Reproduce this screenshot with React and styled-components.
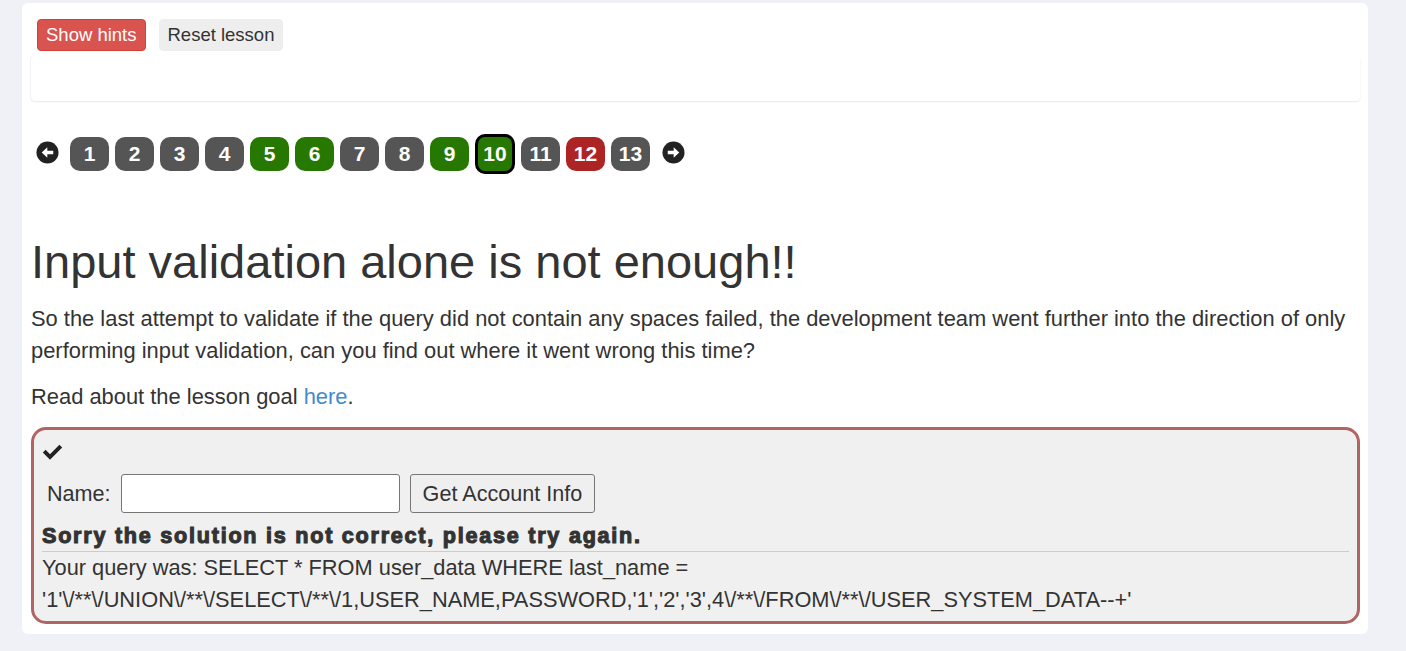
import React from "react";
import styled, { createGlobalStyle } from "styled-components";

const Global = createGlobalStyle`
  html, body { margin: 0; padding: 0; background: #f0f1f6; }
  body { font-family: "Liberation Sans", Arial, sans-serif; color: #333; }
  * { box-sizing: border-box; }
`;

const Card = styled.div`
  margin: 3px 0 0 22px;
  width: 1346px;
  height: 631px;
  background: #fff;
  border-radius: 6px;
  padding: 16px 8px 0 9px;
`;

const ButtonBar = styled.div`
  display: flex;
  gap: 13px;
  padding-left: 6px;
`;

const Btn = styled.button`
  height: 32px;
  padding: 0 8px;
  font-family: "Liberation Sans", Arial, sans-serif;
  font-size: 18.5px;
  border-radius: 4px;
  cursor: pointer;
  border: 1px solid ${(p) => (p.$danger ? "#d43f3a" : "#eeeeee")};
  background: ${(p) => (p.$danger ? "#d9534f" : "#eeeeee")};
  color: ${(p) => (p.$danger ? "#fff" : "#333")};
`;

const Panel = styled.div`
  margin-top: 4px;
  height: 46px;
  border-radius: 4px;
  background: #fff;
  box-shadow: 0 1px 2px rgba(0, 0, 0, 0.09), -1px 0 1px rgba(0, 0, 0, 0.03);
`;

const Pager = styled.div`
  display: flex;
  align-items: center;
  height: 40px;
  margin-top: 33px;
  padding-left: 5px;
`;

const ArrowWrap = styled.span`
  display: flex;
  width: 23px;
  height: 23px;
  margin: ${(p) => (p.$right ? "-3px 0 0 6px" : "-3px 11px 0 0")};
`;

const Pill = styled.span`
  display: flex;
  align-items: center;
  justify-content: center;
  width: ${(p) => (p.$active ? "40px" : "39px")};
  height: ${(p) => (p.$active ? "40px" : "34px")};
  margin-right: 6px;
  border-radius: 10px;
  background: ${(p) => p.$bg};
  border: ${(p) => (p.$active ? "3px solid #000" : "none")};
  color: #fff;
  font-family: "Liberation Sans", Arial, sans-serif;
  font-weight: bold;
  font-size: 21px;
`;

const Title = styled.h1`
  margin: 62px 0 0;
  font-size: 47px;
  font-weight: 500;
  line-height: 52px;
  color: #333;
`;

const Para = styled.p`
  margin: ${(p) => p.$m || "0"};
  font-size: 21.9px;
  line-height: 32px;
  color: #333;
`;

const Link = styled.a`
  color: #428bca;
  text-decoration: none;
`;

const Feedback = styled.div`
  margin-top: 14px;
  height: 197px;
  border: 3px solid #b06464;
  border-radius: 15px;
  background: #f0f0f0;
  padding: 8px 8px 0 8px;
  overflow: hidden;
`;

const CheckLine = styled.div`
  height: 28px;
  display: flex;
  align-items: center;
`;

const FormRow = styled.div`
  display: flex;
  align-items: center;
  margin-top: 8px;
  padding-left: 5px;
  gap: 10px;
`;

const Label = styled.label`
  font-size: 21.6px;
  color: #333;
`;

const Input = styled.input`
  width: 279px;
  height: 39px;
  border: 1px solid #767676;
  border-radius: 3px;
  background: #fff;
  font-size: 20px;
`;

const FormBtn = styled.button`
  height: 39px;
  padding: 0 12px;
  border: 1px solid #767676;
  border-radius: 3px;
  background: #efefef;
  color: #333;
  font-family: "Liberation Sans", Arial, sans-serif;
  font-size: 21.6px;
`;

const Sorry = styled.div`
  margin-top: 8px;
  font-size: 21.6px;
  line-height: 30px;
  font-weight: bold;
  letter-spacing: 1.75px;
  -webkit-text-stroke: 1.1px #333;
  color: #333;
`;

const Rule = styled.div`
  height: 1px;
  background: #cccccc;
`;

const Query = styled.div`
  margin-top: 0;
  font-size: 21.8px;
  line-height: 32px;
  color: #333;
`;

const Arrow = ({ right }) => (
  <ArrowWrap $right={right}>
    <svg width="23" height="23" viewBox="0 0 24 24">
      <circle cx="12" cy="12" r="11.5" fill="#222" />
      <path
        d={
          right
            ? "M6 10.2h6.2V6.5L18 12l-5.8 5.5v-3.7H6z"
            : "M18 10.2h-6.2V6.5L6 12l5.8 5.5v-3.7H18z"
        }
        fill="#fff"
      />
    </svg>
  </ArrowWrap>
);

const GRAY = "#555555";
const GREEN = "#267800";
const RED = "#ad2424";

const pages = [
  GRAY, GRAY, GRAY, GRAY, GREEN, GREEN, GRAY, GRAY, GREEN, GREEN, GRAY, RED, GRAY,
];

export default function App() {
  return (
    <>
      <Global />
      <Card>
        <ButtonBar>
          <Btn $danger>Show hints</Btn>
          <Btn>Reset lesson</Btn>
        </ButtonBar>
        <Panel />
        <Pager>
          <Arrow />
          {pages.map((c, i) => (
            <Pill key={i} $bg={c} $active={i === 9}>
              {i + 1}
            </Pill>
          ))}
          <Arrow right />
        </Pager>
        <Title>Input validation alone is not enough!!</Title>
        <Para $m="15px 0 0">
          So the last attempt to validate if the query did not contain any spaces failed, the
          development team went further into the direction of only performing input validation, can
          you find out where it went wrong this time?
        </Para>
        <Para $m="14px 0 0">
          Read about the lesson goal <Link href="#">here</Link>.
        </Para>
        <Feedback>
          <CheckLine>
            <svg width="21" height="16" viewBox="0 0 21 16">
              <path d="M0.8 8.6 L3.6 5.8 L8 10.2 L17.4 0.8 L20.2 3.6 L8 15.8 Z" fill="#222" />
            </svg>
          </CheckLine>
          <FormRow>
            <Label>Name:</Label>
            <Input type="text" />
            <FormBtn>Get Account Info</FormBtn>
          </FormRow>
          <Sorry>Sorry the solution is not correct, please try again.</Sorry>
          <Rule />
          <Query>
            Your query was: SELECT * FROM user_data WHERE last_name =
            <br />
            '1'\/**\/UNION\/**\/SELECT\/**\/1,USER_NAME,PASSWORD,'1','2','3',4\/**\/FROM\/**\/USER_SYSTEM_DATA--+'
          </Query>
        </Feedback>
      </Card>
    </>
  );
}
